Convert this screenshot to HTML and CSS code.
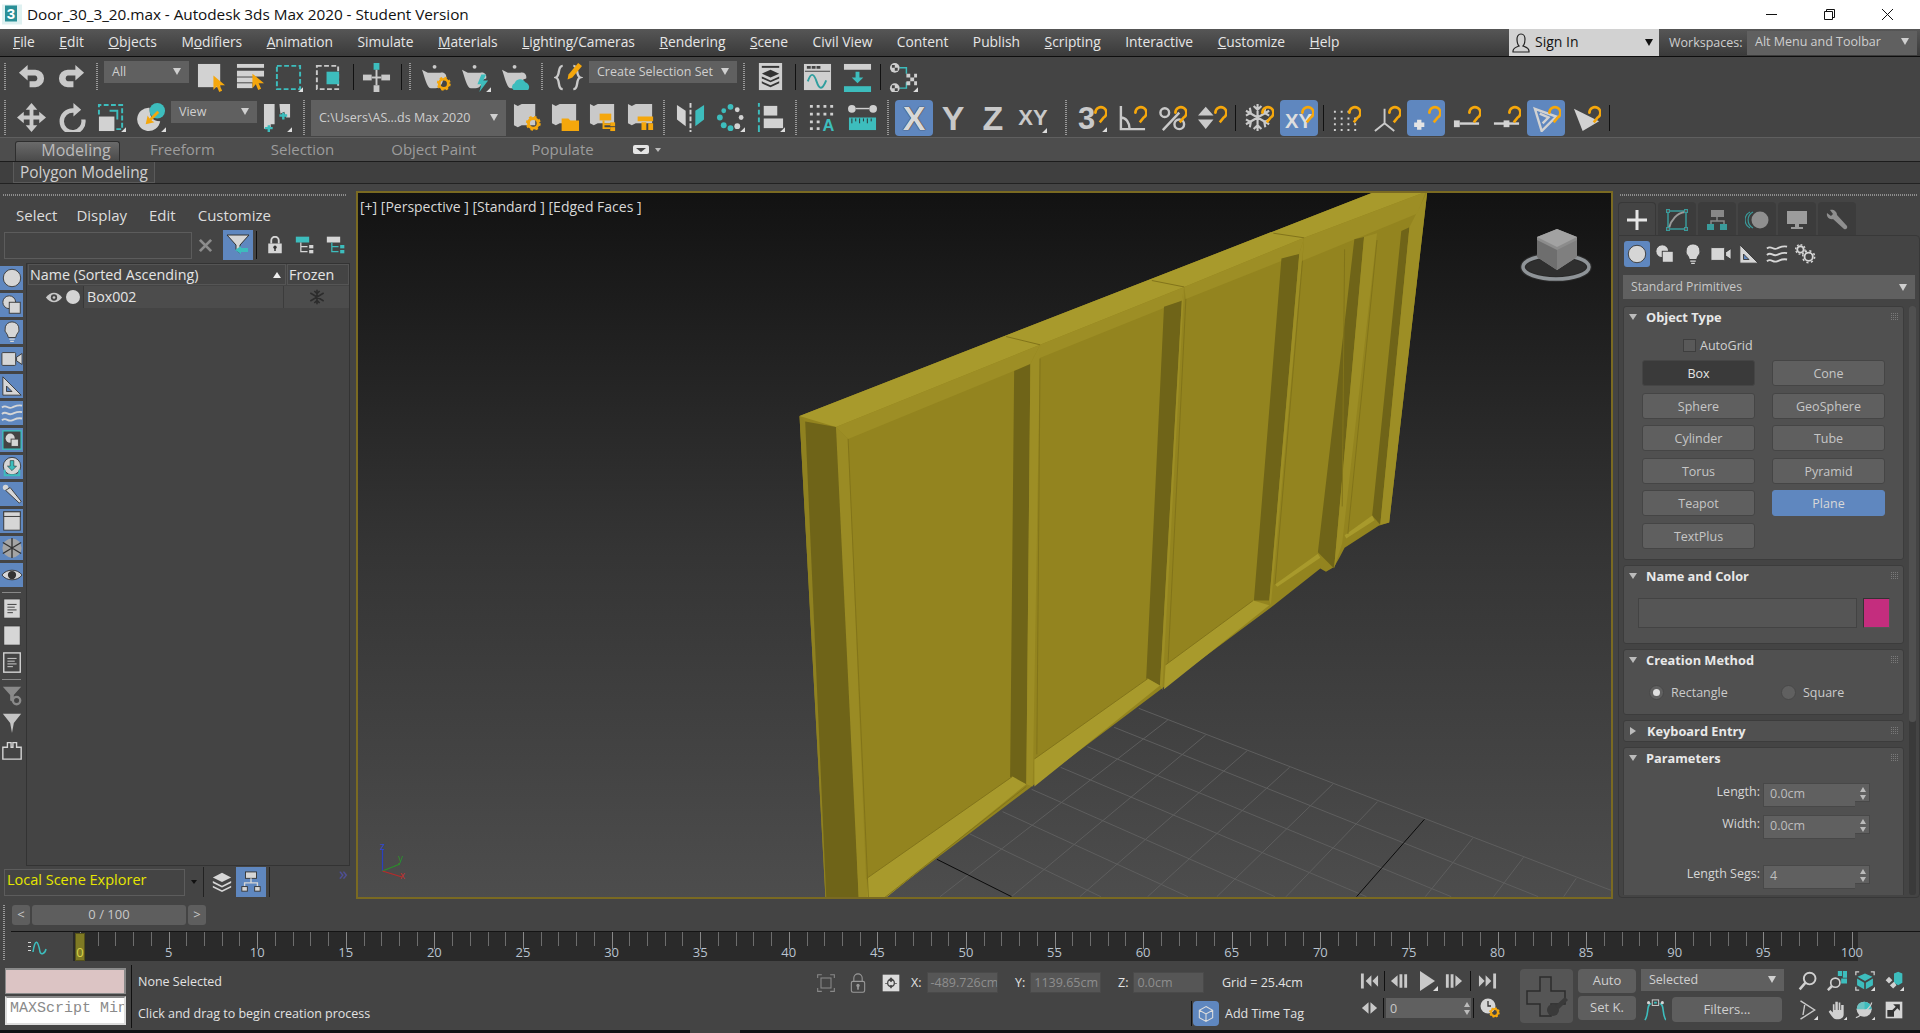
FILE: index.html
```html
<!DOCTYPE html>
<html lang="en">
<head>
<meta charset="utf-8">
<title>Door_30_3_20.max - Autodesk 3ds Max 2020 - Student Version</title>
<link rel="stylesheet" href="styles.css">
</head>
<body>
<svg class="sprite" width="0" height="0" aria-hidden="true">
<defs>
<symbol id="corner" viewBox="0 0 30 30"><path d="M25 30h5v-5z" fill="#ddd"/></symbol>
<symbol id="magnet" viewBox="0 0 30 30"><path d="M18 10a5.7 5.7 0 1 1 8.6 5L22.500 20" fill="none" stroke="#f5a70c" stroke-width="2.700"/><circle cx="18" cy="10" r="1.300" fill="#f5a70c"/></symbol>
<symbol id="gear" viewBox="0 0 16 16"><circle cx="8" cy="8" r="5" fill="none" stroke="#f5a70c" stroke-width="3"/><circle cx="8" cy="8" r="6.500" fill="none" stroke="#f5a70c" stroke-width="2.400" stroke-dasharray="2.600 2.500"/></symbol>
<symbol id="undo" viewBox="0 0 30 30"><path fill="#c9c9c9" d="M2 10 11 2v5h8a9 9 0 0 1 0 18h-6v-6h6a3.200 3.200 0 0 0 0-6h-8v5z"/></symbol>
<symbol id="redo" viewBox="0 0 30 30"><path fill="#c9c9c9" transform="matrix(-1 0 0 1 30 0)" d="M2 10 11 2v5h8a9 9 0 0 1 0 18h-6v-6h6a3.200 3.200 0 0 0 0-6h-8v5z"/></symbol>
<symbol id="select" viewBox="0 0 30 30"><rect x="1" y="1" width="23" height="24" fill="#d2d2d2"/><path fill="#f5a70c" d="M17 13v15l3.500-4 2.500 6 3-1.300-2.600-5.700H29z"/></symbol>
<symbol id="byname" viewBox="0 0 30 30"><g fill="#d2d2d2"><rect x="1" y="1" width="28" height="4"/><rect x="1" y="8" width="28" height="6"/><rect x="1" y="15" width="17" height="5"/><rect x="1" y="21" width="16" height="5"/></g><path fill="#f5a70c" d="M17 11v15l3.500-4 2.500 6 3-1.300-2.600-5.700H29z"/></symbol>
<symbol id="region" viewBox="0 0 30 30"><rect x="3" y="3" width="24" height="24" fill="none" stroke="#3dbdbd" stroke-width="2" stroke-dasharray="5 2.500"/><use href="#corner"/></symbol>
<symbol id="window" viewBox="0 0 30 30"><rect x="4" y="3" width="22" height="24" fill="none" stroke="#c9c9c9" stroke-width="2" stroke-dasharray="5 2.500"/><rect x="14" y="9" width="13" height="13" fill="#3dbdbd"/></symbol>
<symbol id="place" viewBox="0 0 30 30"><rect x="12" y="0" width="6" height="7" fill="#3dbdbd"/><g fill="#c9c9c9"><rect x="1" y="12" width="9" height="6"/><rect x="20" y="12" width="9" height="6"/><rect x="12" y="23" width="6" height="7"/><rect x="14" y="7" width="2" height="16"/><rect x="10" y="14" width="10" height="2"/></g></symbol>
<symbol id="teapot" viewBox="0 0 30 30"><circle cx="13" cy="4" r="2" fill="#c9c9c9"/><path fill="#c9c9c9" d="M0 7l6 3h13c4-1 7 2 6 6l-3 1c-1 4-3 9-8 9H9C5 26 3 15 0 7z"/></symbol>
<symbol id="render1" viewBox="0 0 30 30"><use href="#teapot"/><use href="#gear" x="15" y="14" width="15" height="15"/></symbol>
<symbol id="render2" viewBox="0 0 30 30"><use href="#teapot"/><path fill="#3dbdbd" d="M20 12l-4 10h4l-2 8 9-12h-5l3-6z"/><use href="#corner"/></symbol>
<symbol id="render3" viewBox="0 0 30 30"><use href="#teapot"/><path fill="#3dbdbd" d="M12 28a4 4 0 0 1 1-7 6 6 0 0 1 11-1 5 5 0 0 1 3 8z"/></symbol>
<symbol id="braces" viewBox="0 0 30 30"><path fill="none" stroke="#c9c9c9" stroke-width="2.500" d="M9 3C3 3 7 13 2 15c5 2 1 12 7 12M20 3c6 0 2 10 7 12-5 2-1 12-7 12"/><path fill="#f5a70c" d="M25 0l4 3-10 12-5 2 1-5z"/></symbol>
<symbol id="layers" viewBox="0 0 30 30"><rect x="3" y="0" width="24" height="28" fill="#cfcfcf"/><rect x="6" y="3" width="18" height="2" fill="#333"/><path fill="#333" d="M15 7l9 4-9 4-9-4zM6 14l9 4 9-4v2l-9 4-9-4zM6 19l9 4 9-4v2l-9 4-9-4z"/></symbol>
<symbol id="curve" viewBox="0 0 30 30"><rect x="1" y="1" width="28" height="27" fill="#cfcfcf"/><path fill="#444" d="M2 8h26v1H2zM4 3h4v3H4zM9 3h4v3H9zM14 3h4v3h-4z"/><path fill="none" stroke="#2f9e9e" stroke-width="2" d="M5 19c3-9 6-9 9 0s6 9 10-1"/></symbol>
<symbol id="dope" viewBox="0 0 30 30"><rect x="1" y="1" width="28" height="6" fill="#cfcfcf"/><rect x="1" y="24" width="28" height="6" fill="#3dbdbd"/><path fill="#3dbdbd" d="M13 9h4v6h4l-6 6-6-6h4z"/></symbol>
<symbol id="schema" viewBox="0 0 30 30"><path fill="none" stroke="#3dbdbd" stroke-width="1.500" d="M11 5h7v6M11 26h7v-6"/><g fill="#cfcfcf"><circle cx="6" cy="5" r="5"/><circle cx="6" cy="26" r="5"/><path d="M18 11h4v4h-4zM22 15h4v4h-4zM18 19h4v4h-4zM26 11h3v4h-3zM26 19h3v4h-3z"/></g><path fill="#444" d="M3 2h3v3H3zM6 5h3v3H6zM3 23h3v3H3zM6 26h3v3H6z"/><use href="#corner"/></symbol>
<symbol id="move" viewBox="0 0 30 30"><path fill="#c9c9c9" d="M15 0l6 7h-4v6h6V9l7 6-7 6v-4h-6v6h4l-6 7-6-7h4v-6H7v4l-7-6 7-6v4h6V7H9z"/></symbol>
<symbol id="rotate" viewBox="0 0 30 30"><path fill="#c9c9c9" d="M17 0l8 7-8 7v-4a9 9 0 1 0 8 7h4.500A13.500 13.500 0 1 1 17 5.500z"/></symbol>
<symbol id="scale" viewBox="0 0 30 30"><rect x="2" y="14" width="16" height="15" fill="#d2d2d2"/><path fill="none" stroke="#3dbdbd" stroke-width="2" stroke-dasharray="5 2.500" d="M2 12V2h24v25H20"/><path fill="none" stroke="#3dbdbd" stroke-width="2" d="M13 8h8v9"/><use href="#corner"/></symbol>
<symbol id="placement" viewBox="0 0 30 30"><path fill="#d2d2d2" d="M13 5a12 12 0 1 0 11 14C15 19 13 13 13 5z"/><circle cx="21" cy="8" r="8" fill="#3dbdbd"/><path fill="#f5a70c" d="M21 8l-8 8-2-3-2 9 9-2-3-2 8-8z"/><use href="#corner"/></symbol>
<symbol id="pivot" viewBox="0 0 30 30"><path fill="#d2d2d2" d="M1 1h11v21H8v5l-3-2-4 2zM17 1h11v14h-4l-2-6-4 2z"/><path fill="none" stroke="#3dbdbd" stroke-width="2.500" d="M6 23v7M2 26h8M21 10v7M17 13h8"/><use href="#corner"/></symbol>
<symbol id="scroll1" viewBox="0 0 30 30"><path fill="#c9c9c9" d="M1 1l4 2 4-2h14v22H9l-4 2-4-2z"/><use href="#gear" x="13" y="13" width="16" height="16"/></symbol>
<symbol id="scroll2" viewBox="0 0 30 30"><path fill="#c9c9c9" d="M1 1l4 2 4-2h17v20H9l-4 2-4-2z"/><path fill="#f5a70c" d="M11 16h7l2 2h9v11H11z"/></symbol>
<symbol id="scroll3" viewBox="0 0 30 30"><path fill="#c9c9c9" d="M1 1l4 2 4-2h17v20H9l-4 2-4-2z"/><rect x="11" y="11" width="12" height="7" fill="#f5a70c"/><path fill="none" stroke="#f5a70c" stroke-width="2" d="M15 18v8h7M15 22h7"/><rect x="22" y="20" width="5" height="4" fill="#f5a70c"/><rect x="22" y="25" width="5" height="4" fill="#f5a70c"/></symbol>
<symbol id="scroll4" viewBox="0 0 30 30"><path fill="#c9c9c9" d="M1 1l4 2 4-2h17v20H9l-4 2-4-2z"/><path fill="#f5a70c" d="M11 14h16v5H11zM15 20h5v8h-5zM22 21h5v7h-5z"/></symbol>
<symbol id="mirror" viewBox="0 0 30 30"><path fill="#d2d2d2" d="M1 2l9 6v16l-9-7z"/><path fill="#3dbdbd" d="M29 2l-9 6v16l9-7z"/><path stroke="#d2d2d2" stroke-width="2" stroke-dasharray="5 2" d="M15 0v30"/></symbol>
<symbol id="array" viewBox="0 0 30 30"><g fill="#3dbdbd"><circle cx="15" cy="4" r="3"/><circle cx="4" cy="15" r="3"/><circle cx="8" cy="8" r="2.500"/><circle cx="8" cy="23" r="3"/><circle cx="15" cy="26" r="3"/></g><g fill="#d2d2d2"><circle cx="22" cy="7" r="2.500"/><circle cx="26" cy="15" r="2.500"/><circle cx="22" cy="24" r="3"/></g><use href="#corner"/></symbol>
<symbol id="align" viewBox="0 0 30 30"><path fill="#3dbdbd" d="M2 0h2v4H2zM2 7h2v5H2zM2 15h2v5H2zM2 23h2v7H2z"/><rect x="8" y="3" width="14" height="10" fill="#d2d2d2"/><rect x="8" y="16" width="20" height="10" fill="#d2d2d2"/><use href="#corner"/></symbol>
<symbol id="gridA" viewBox="0 0 30 30"><g fill="#cfcfcf"><path d="M2 2h3v3H2zM9 2h3v3H9zM16 2h3v3h-3zM23 2h3v3h-3zM2 10h3v3H2zM9 10h3v3H9zM16 10h3v3h-3zM23 10h3v3h-3zM2 18h3v3H2zM9 18h3v3H9zM2 25h3v3H2zM9 25h3v3H9z"/></g><text x="15" y="29" class="svg-a">A</text></symbol>
<symbol id="measure" viewBox="0 0 30 30"><g fill="#cfcfcf"><circle cx="4" cy="6" r="4"/><circle cx="26" cy="6" r="4"/><rect x="8" y="5" width="14" height="1.500"/></g><rect x="1" y="15" width="28" height="13" fill="#3dbdbd"/><path stroke="#333" stroke-width="1" d="M4 16v5M8 16v3M12 16v5M16 16v3M20 16v5M24 16v3"/></symbol>
<symbol id="snap3" viewBox="0 0 30 30"><text x="0" y="27" class="svg-3">3</text><use href="#magnet"/><use href="#corner"/></symbol>
<symbol id="snapang" viewBox="0 0 30 30"><path fill="none" stroke="#c9c9c9" stroke-width="2.500" d="M3 3v24h25M3 15c5 0 9 5 9 12"/><use href="#magnet"/></symbol>
<symbol id="snappct" viewBox="0 0 30 30"><circle cx="7" cy="10" r="4.500" fill="none" stroke="#c9c9c9" stroke-width="2.500"/><circle cx="22" cy="22" r="5" fill="none" stroke="#c9c9c9" stroke-width="2.500"/><path stroke="#c9c9c9" stroke-width="2.500" d="M5 28L22 10"/><use href="#magnet"/></symbol>
<symbol id="snapspin" viewBox="0 0 30 30"><path fill="#c9c9c9" d="M8 4l8 9H0zM0 17h16l-8 10z"/><use href="#magnet"/></symbol>
<symbol id="flake" viewBox="0 0 30 30"><g stroke="#c9c9c9" stroke-width="2.200" fill="none"><path d="M13 1v28M1 8l24 14M1 22L25 8M9 3l4 4 4-4M9 27l4-4 4 4M1 13l5-3-1-5M1 17l5 3-1 5M25 13l-5-3 1-5M25 17l-5 3 1 5"/></g><use href="#magnet"/></symbol>
<symbol id="snapxy" viewBox="0 0 30 30"><text x="0" y="26" class="svg-xy">XY</text><use href="#magnet"/></symbol>
<symbol id="snapgrid" viewBox="0 0 30 30"><g fill="#cfcfcf"><path d="M2 8h2v2H2zM9 8h2v2H9zM16 8h2v2h-2zM2 15h2v2H2zM9 15h2v2H9zM16 15h2v2h-2zM23 15h2v2h-2zM2 21h2v2H2zM9 21h2v2H9zM16 21h2v2h-2zM23 21h2v2h-2zM2 27h2v2H2zM9 27h2v2H9zM16 27h2v2h-2zM23 27h2v2h-2z"/></g><use href="#magnet"/></symbol>
<symbol id="snapaxis" viewBox="0 0 30 30"><path fill="none" stroke="#c9c9c9" stroke-width="2" d="M13 6v15L3 29M13 21l10 8"/><use href="#magnet"/></symbol>
<symbol id="snapplus" viewBox="0 0 30 30"><path fill="#e4e4e4" d="M6 18h3v3h3v3H9v3H6v-3H3v-3h3z" stroke="#e4e4e4" stroke-width="1.500"/><use href="#magnet"/></symbol>
<symbol id="snapdl" viewBox="0 0 30 30"><rect x="2" y="18" width="6" height="7" fill="#d2d2d2"/><rect x="8" y="20" width="20" height="2.500" fill="#d2d2d2"/><use href="#magnet"/></symbol>
<symbol id="snapdm" viewBox="0 0 30 30"><rect x="12" y="18" width="6" height="7" fill="#d2d2d2"/><rect x="2" y="20" width="26" height="2.500" fill="#d2d2d2"/><use href="#magnet"/></symbol>
<symbol id="snaptri" viewBox="0 0 30 30"><path fill="none" stroke="#d2d2d2" stroke-width="2.500" d="M3 6l22 8-15 15zM8 11l9 4-6 6" /><use href="#magnet"/></symbol>
<symbol id="snaparrow" viewBox="0 0 30 30"><path fill="#d2d2d2" d="M2 6l26 13-17 10z"/><use href="#magnet"/></symbol>
<symbol id="user" viewBox="0 0 20 20"><path fill="none" stroke="#222" stroke-width="1.200" d="M10 1c3 0 4 3 4 5 0 3-1 6-2 7 3 1 6 2 6 5v1H2v-1c0-3 3-4 6-5-1-1-2-4-2-7 0-2 1-5 4-5z"/></symbol>
<symbol id="sphere" viewBox="0 0 24 24"><circle cx="12" cy="12" r="9.500" fill="#d6d6d6" stroke="#383838" stroke-width="1"/></symbol>
<symbol id="shapes" viewBox="0 0 24 24"><circle cx="9" cy="9" r="7" fill="#d6d6d6" stroke="#383838"/><rect x="9" y="9" width="12" height="12" fill="#d6d6d6" stroke="#383838"/></symbol>
<symbol id="light" viewBox="0 0 24 24"><path fill="#d6d6d6" stroke="#383838" d="M12 1a8 8 0 0 1 5 14l-1 3H8l-1-3A8 8 0 0 1 12 1z"/><path fill="#d6d6d6" d="M9 19h6v1.500H9zM10 21.500h4V23h-4z"/></symbol>
<symbol id="camera" viewBox="0 0 24 24"><rect x="1" y="5" width="15" height="14" rx="1" fill="#d6d6d6" stroke="#383838"/><path fill="#d6d6d6" stroke="#383838" d="M17 10l6-4v12l-6-4z"/></symbol>
<symbol id="helper" viewBox="0 0 24 24"><path fill="#d6d6d6" stroke="#383838" d="M2 2l20 20H2z"/><path fill="#5f87bf" stroke="#383838" d="M6 12l6 6H6z"/></symbol>
<symbol id="waves" viewBox="0 0 24 24"><path fill="none" stroke="#d6d6d6" stroke-width="2" d="M1 6c5-4 6 2 11 0s6-3 11-2M1 13c5-4 6 2 11 0s6-3 11-2M1 20c5-4 6 2 11 0s6-3 11-2"/></symbol>
<symbol id="group" viewBox="0 0 24 24"><rect x="2" y="2" width="20" height="20" fill="#444" stroke="#3dbdbd" stroke-width="1.500"/><circle cx="10" cy="10" r="5" fill="#d6d6d6"/><rect x="11" y="11" width="8" height="8" fill="#d6d6d6" stroke="#444"/></symbol>
<symbol id="xref" viewBox="0 0 24 24"><circle cx="12" cy="11" r="9.500" fill="#d6d6d6" stroke="#383838"/><path fill="#3dbdbd" stroke="#222" stroke-width=".6" d="M10 5h4v6h3l-5 5-5-5h3z"/><path fill="none" stroke="#3dbdbd" stroke-width="2" d="M4 15v6h16v-6"/></symbol>
<symbol id="bone" viewBox="0 0 24 24"><circle cx="5" cy="5" r="3" fill="#d6d6d6"/><path fill="#d6d6d6" stroke="#383838" d="M5 8l5-3 12 15-2 2z"/></symbol>
<symbol id="boxs" viewBox="0 0 24 24"><rect x="3" y="2" width="18" height="20" fill="#d6d6d6" stroke="#333"/><rect x="3" y="2" width="18" height="5" fill="#d6d6d6" stroke="#333"/></symbol>
<symbol id="flakes" viewBox="0 0 24 24"><circle cx="12" cy="12" r="10.500" fill="#a4a4a4"/><g stroke="#333" stroke-width="1.500" fill="none"><path d="M12 1v22M2 6l20 12M2 18L22 6"/></g></symbol>
<symbol id="eye" viewBox="0 0 24 24"><path fill="#d6d6d6" stroke="#333" d="M1 12c5-7 17-7 22 0-5 7-17 7-22 0z"/><circle cx="12" cy="12" r="4.500" fill="#333"/></symbol>
<symbol id="doc1" viewBox="0 0 24 24"><rect x="3" y="1" width="18" height="21" fill="#d6d6d6" stroke="#333"/><path stroke="#333" d="M7 7h10M7 10h8M7 13h10M7 16h6"/></symbol>
<symbol id="doc2" viewBox="0 0 24 24"><rect x="3" y="1" width="18" height="21" fill="#d6d6d6" stroke="#333"/></symbol>
<symbol id="doc3" viewBox="0 0 24 24"><rect x="3" y="1" width="18" height="21" fill="#444" stroke="#d6d6d6" stroke-width="1.500"/><path stroke="#d6d6d6" d="M7 7h10M7 10h8M7 13h10M7 16h6"/></symbol>
<symbol id="filtg" viewBox="0 0 24 24"><path fill="#8a8a8a" d="M2 2h20l-8 9v8l-4-2v-6z"/><circle cx="17" cy="17" r="4" fill="none" stroke="#8a8a8a" stroke-width="2.500"/></symbol>
<symbol id="filt" viewBox="0 0 24 24"><path fill="#c4c4c4" d="M2 2h20l-8 10-2 11-2-11z"/></symbol>
<symbol id="bracket" viewBox="0 0 24 24"><path fill="none" stroke="#d6d6d6" stroke-width="1.500" d="M2 9h5V4h4v5h2V4h4v5h5v13H2z"/></symbol>
<symbol id="filtb" viewBox="0 0 24 24"><path fill="#d6d6d6" stroke="#333" d="M1 2h22l-9 10v8l-4-3v-5z"/><path fill="#3dbdbd" d="M9 17l6-4v2h7v4h-7v2z"/></symbol>
<symbol id="lock" viewBox="0 0 24 24"><rect x="3" y="10" width="18" height="13" fill="#d6d6d6"/><path fill="none" stroke="#d6d6d6" stroke-width="2.500" d="M7 10V6a5 5 0 0 1 10 0v4"/><circle cx="12" cy="15" r="2.200" fill="#333"/><rect x="11" y="15" width="2" height="5" fill="#333"/></symbol>
<symbol id="tree1" viewBox="0 0 24 24"><rect x="1" y="2" width="16" height="7" fill="#3dbdbd"/><path fill="none" stroke="#d6d6d6" stroke-width="1.500" d="M7 9v11h8M7 14h8"/><rect x="17" y="12" width="5" height="4" fill="#d6d6d6"/><rect x="17" y="18" width="5" height="4" fill="#d6d6d6"/></symbol>
<symbol id="tree2" viewBox="0 0 24 24"><rect x="1" y="2" width="16" height="7" fill="#d6d6d6"/><path fill="none" stroke="#3dbdbd" stroke-width="1.500" d="M7 9v11h8M7 14h8"/><rect x="17" y="12" width="5" height="4" fill="#3dbdbd"/><rect x="17" y="18" width="5" height="4" fill="#3dbdbd"/></symbol>
<symbol id="graph" viewBox="0 0 24 24"><rect x="6" y="1" width="12" height="7" fill="#d6d6d6" stroke="#333"/><path fill="none" stroke="#d6d6d6" stroke-width="1.500" d="M12 8v5M5 17v-4h14v4"/><rect x="2" y="17" width="6" height="5" fill="#d6d6d6" stroke="#333"/><rect x="16" y="17" width="6" height="5" fill="#d6d6d6" stroke="#333"/></symbol>
<symbol id="stack" viewBox="0 0 24 24"><path fill="#d6d6d6" d="M12 2l10 5-10 5L2 7zM2 11l10 5 10-5 0 2-10 5-10-5zM2 16l10 5 10-5 0 2-10 5-10-5z"/></symbol>
<symbol id="plus" viewBox="0 0 24 24"><path fill="#e6e6e6" d="M10.500 2h3v8.500H22v3h-8.500V22h-3v-8.500H2v-3h8.500z"/></symbol>
<symbol id="modify" viewBox="0 0 24 24"><rect x="3" y="3" width="18" height="18" fill="none" stroke="#3a9b9b" stroke-width="1.500"/><path fill="none" stroke="#9a9a9a" stroke-width="2" d="M4 20C6 12 12 5 20 4"/><g fill="#555" stroke="#3a9b9b"><rect x="1.500" y="1.500" width="3" height="3"/><rect x="19.500" y="1.500" width="3" height="3"/><rect x="1.500" y="19.500" width="3" height="3"/><rect x="19.500" y="19.500" width="3" height="3"/></g></symbol>
<symbol id="hier" viewBox="0 0 24 24"><rect x="6" y="2" width="13" height="7" fill="#888"/><path fill="none" stroke="#888" stroke-width="1.500" d="M12 9v4M6 17v-4h13v4"/><rect x="2" y="16" width="7" height="6" fill="#3a9b9b"/><rect x="15" y="16" width="7" height="6" fill="#3a9b9b"/></symbol>
<symbol id="motion" viewBox="0 0 24 24"><circle cx="15" cy="12" r="8.500" fill="#8f8f8f"/><path fill="none" stroke="#3a9b9b" stroke-width="1.200" d="M8 4a9 9 0 0 0 0 16M5 4a9 9 0 0 0 0 16"/></symbol>
<symbol id="display" viewBox="0 0 24 24"><rect x="2" y="3" width="20" height="13" fill="#9c9c9c"/><rect x="10" y="16" width="4" height="3" fill="#9c9c9c"/><rect x="6" y="19" width="12" height="2" fill="#9c9c9c"/></symbol>
<symbol id="wrench" viewBox="0 0 24 24"><path fill="#8f8f8f" d="M2 5l4 3 2-2-3-4c3-1 7 1 7 5l10 11c1 2-1 4-3 3L8 11C5 12 1 9 2 5z"/></symbol>
<symbol id="gears" viewBox="0 0 24 24"><circle cx="7" cy="7" r="3.500" fill="none" stroke="#d6d6d6" stroke-width="2"/><circle cx="7" cy="7" r="5.200" fill="none" stroke="#d6d6d6" stroke-width="1.500" stroke-dasharray="2 2"/><circle cx="16" cy="15" r="4.500" fill="none" stroke="#d6d6d6" stroke-width="2"/><circle cx="16" cy="15" r="6.500" fill="none" stroke="#d6d6d6" stroke-width="1.700" stroke-dasharray="2.300 2.800"/></symbol>
<symbol id="waveline" viewBox="0 0 20 16"><path fill="#d6d6d6" d="M0 3h3v1H0zM0 7h3v1H0zM0 11h3v1H0z"/><path fill="none" stroke="#3dbdbd" stroke-width="1.500" d="M5 13c2-14 5-12 7 0 1 3 5 2 6-3"/></symbol>
<symbol id="pstart" viewBox="0 0 20 16"><path fill="#c9c9c9" d="M1 0h3v16H1zM12 2v12l-6-6zM19 2v12l-6-6z"/></symbol>
<symbol id="pprev" viewBox="0 0 20 16"><path fill="#c9c9c9" d="M8 2v12L1 8zM10 1h3v14h-3zM15 1h3v14h-3z"/></symbol>
<symbol id="pnext" viewBox="0 0 20 16"><path fill="#c9c9c9" d="M12 2v12l7-6zM2 1h3v14H2zM7 1h3v14H7z"/></symbol>
<symbol id="pend" viewBox="0 0 20 16"><path fill="#c9c9c9" d="M16 0h3v16h-3zM8 2v12l6-6zM1 2v12l6-6z"/></symbol>
<symbol id="pplay" viewBox="0 0 20 20"><path fill="#c9c9c9" d="M2 0l15 10L2 20z"/><path fill="#ddd" d="M15 20h5v-5z"/></symbol>
<symbol id="lr" viewBox="0 0 20 16"><path fill="#c9c9c9" d="M9 2v12L2 8zM11 2v12l7-6z"/></symbol>
<symbol id="clock" viewBox="0 0 20 20"><circle cx="8" cy="8" r="7.500" fill="#d6d6d6"/><path stroke="#333" stroke-width="1.300" d="M8 3v5h3" fill="none"/><use href="#gear" x="9" y="9" width="11" height="11"/></symbol>
<symbol id="keybig" viewBox="0 0 44 44"><path fill="none" stroke="#2c2c2c" stroke-width="1.500" d="M15 3h11v14h14v13H26v12H15V30H2V17h13z"/><g fill="#3a3a3a"><circle cx="28" cy="36" r="6"/><path d="M30 32l10-9 3 3-9 9z"/></g></symbol>
<symbol id="cornerkey" viewBox="0 0 24 24"><rect x="9" y="1" width="7" height="6" fill="none" stroke="#d6d6d6"/><rect x="11" y="3" width="3" height="2" fill="#3dbdbd"/><path fill="none" stroke="#3dbdbd" stroke-width="1.700" d="M8 5C2 6 6 16 1 23M17 5c6 1 2 11 7 18"/><circle cx="5" cy="4" r="1.700" fill="#d6d6d6"/><circle cx="20" cy="4" r="1.700" fill="#d6d6d6"/></symbol>
<symbol id="nzoom" viewBox="0 0 24 24"><circle cx="14" cy="9" r="7" fill="none" stroke="#d0d0d0" stroke-width="2.300"/><path stroke="#d0d0d0" stroke-width="3" d="M9 14L2 22"/></symbol>
<symbol id="nzoomall" viewBox="0 0 24 24"><circle cx="10" cy="14" r="5.500" fill="none" stroke="#d0d0d0" stroke-width="2"/><path stroke="#d0d0d0" stroke-width="3" d="M6 18L1 23"/><path fill="#3dbdbd" d="M13 0h5v6h-5zM19 0h5v8h-5zM17 9h7v6h-7z"/></symbol>
<symbol id="nextents" viewBox="0 0 24 24"><path fill="none" stroke="#d0d0d0" stroke-width="1.500" d="M1 5V1h4M19 1h4v4M1 19v4h4"/><path fill="#3dbdbd" d="M12 3l9 4-9 5-9-5zM2.500 9l8.500 5v8l-8.500-5zM21.500 9l-8.500 5v8l8.500-5z"/><path fill="#ddd" d="M19 24h5v-5z"/></symbol>
<symbol id="nextall" viewBox="0 0 24 24"><path fill="#3dbdbd" d="M17 1l5 2v11l-5 3-5-3V3zM12 14z"/><path fill="#d0d0d0" d="M6 7l4 4-4 4-4-4zM12 13l3 4-4 4-4-4z"/><path fill="#ddd" d="M19 24h5v-5z"/></symbol>
<symbol id="nfov" viewBox="0 0 24 24"><path fill="none" stroke="#c9c9c9" stroke-width="1.700" d="M3 1l17 11L3 23M8 6l-2 12"/><path fill="#ddd" d="M19 24h5v-5z"/></symbol>
<symbol id="nhand" viewBox="0 0 24 24"><path fill="#d0d0d0" d="M2 14l2-2 3 3V5h2v7h1V2h3v10h1V3h2v9h1V6h3v11c0 4-3 6-6 6h-3c-3 0-4-2-9-9z"/><path fill="#ddd" d="M20 24h4v-4z"/></symbol>
<symbol id="narc" viewBox="0 0 24 24"><circle cx="11" cy="11" r="9" fill="#d0d0d0"/><path fill="#3dbdbd" d="M11 2a9 9 0 0 1 9 9h-9z"/><path fill="#3dbdbd" d="M2 11a9 9 0 0 1 9-9v9z" opacity=".7"/><path fill="none" stroke="#d0d0d0" stroke-width="1.500" d="M1 21C5 21 20 8 20 3"/><path fill="#ddd" d="M20 24h4v-4z"/></symbol>
<symbol id="nmax" viewBox="0 0 24 24"><rect x="2" y="2" width="20" height="20" fill="#d6d6d6"/><path fill="#333" d="M4 20V12l8 0v8zM11 5h8v8l-3-3-4 4-2-2 4-4z"/></symbol>
<symbol id="focus" viewBox="0 0 24 24"><path fill="none" stroke="#888" stroke-width="1.300" d="M2 6V2h5M17 2h5v4M2 18v4h5M17 22h5v-4"/><rect x="6" y="6" width="12" height="12" fill="none" stroke="#888" stroke-width="1.300"/></symbol>
<symbol id="lockout" viewBox="0 0 24 24"><rect x="4" y="10" width="16" height="13" rx="2" fill="none" stroke="#999" stroke-width="1.300"/><path fill="none" stroke="#999" stroke-width="1.300" d="M7 10V6a5 5 0 0 1 10 0v4"/><circle cx="12" cy="15" r="2" fill="#999"/><rect x="11" y="15" width="2" height="5" fill="#999"/></symbol>
<symbol id="abs" viewBox="0 0 24 24"><rect x="2" y="2" width="20" height="20" fill="#dcdcdc"/><path fill="#444" d="M12 5l3 3-3 3-3-3zM5 12h3v1H5zM16 12h3v1h-3zM12 14l2 2-2 3-2-3z"/><circle cx="12" cy="12" r="4" fill="none" stroke="#444" stroke-width="1.500"/></symbol>
<symbol id="cube" viewBox="0 0 24 24"><path fill="none" stroke="#ddd" stroke-width="1.300" d="M12 3l8 4.500v9L12 21l-8-4.500v-9zM4 7.500l8 4.500 8-4.500M12 12v9"/></symbol>
<symbol id="dotsq" viewBox="0 0 8 8"><path fill="#7a7a7a" d="M0 0h1v1H0zM2 0h1v1H2zM4 0h1v1H4zM6 0h1v1H6zM0 2h1v1H0zM2 2h1v1H2zM4 2h1v1H4zM6 2h1v1H6zM0 4h1v1H0zM2 4h1v1H2zM4 4h1v1H4zM6 4h1v1H6zM0 6h1v1H0zM2 6h1v1H2zM4 6h1v1H4zM6 6h1v1H6z"/></symbol>
<symbol id="ribbonicon" viewBox="0 0 16 10"><rect x="0" y="0" width="16" height="9" rx="2" fill="#e4e4e4"/><path fill="#444" d="M3 3h10l-5 4z"/></symbol>
<symbol id="frozenflake" viewBox="0 0 24 24"><g stroke="#2c2c2c" stroke-width="2.400" fill="none"><path d="M12 1v22M2 6l20 12M2 18L22 6M8 3l4 4 4-4M8 21l4-4 4 4"/></g></symbol>
</defs>
</svg>

<div class="app">
  <header class="title">
    <svg class="app-logo" viewBox="0 0 20 20"><rect width="20" height="20" fill="#dff1f1"/><path fill="#2a8f97" d="M3 1h12v16H3z"/><text x="9" y="14" class="svg-logo">3</text></svg>
    <span class="title-text">Door_30_3_20.max - Autodesk 3ds Max 2020 - Student Version</span>
    <div class="win-btns">
      <svg class="win" viewBox="0 0 46 29"><path d="M18 14.500h11" stroke="#111" stroke-width="1"/></svg>
      <svg class="win" viewBox="0 0 46 29"><path d="M18.500 11.500h8v8h-8zM20.500 11.500v-2h8v8h-2" fill="none" stroke="#111"/></svg>
      <svg class="win" viewBox="0 0 46 29"><path d="M18 9l11 11M29 9L18 20" stroke="#111"/></svg>
    </div>
  </header>

  <nav class="menu">
    <div class="menu-items">
      <span><u>F</u>ile</span><span><u>E</u>dit</span><span><u>O</u>bjects</span><span>M<u>o</u>difiers</span><span><u>A</u>nimation</span><span>Simulate</span><span><u>M</u>aterials</span><span><u>L</u>ighting/Cameras</span><span><u>R</u>endering</span><span><u>S</u>cene</span><span>Civil View</span><span>Content</span><span>Publish</span><span><u>S</u>cripting</span><span>Interactive</span><span><u>C</u>ustomize</span><span><u>H</u>elp</span>
    </div>
    <div class="sign-in"><svg class="user"><use href="#user"/></svg><span class="sign-text">Sign In</span><i class="tri dark"></i></div>
    <span class="ws-label">Workspaces:</span>
    <div class="dd ws"><span>Alt Menu and Toolbar</span><i class="tri"></i></div>
  </nav>

  <div class="toolbars">
    <div class="tb r1">
      <i class="grip"></i>
      <b class="ib m5"><svg class="i"><use href="#undo"/></svg></b>
      <b class="ib"><svg class="i"><use href="#redo"/></svg></b>
      <i class="grip m5"></i>
      <div class="dd all m6"><span>All</span><i class="tri"></i></div>
      <b class="ib m2"><svg class="i"><use href="#select"/></svg></b>
      <b class="ib nar"><svg class="i"><use href="#byname"/></svg></b>
      <b class="ib nar"><svg class="i"><use href="#region"/></svg></b>
      <b class="ib"><svg class="i"><use href="#window"/></svg></b>
      <i class="sep m6"></i>
      <b class="ib m2"><svg class="i"><use href="#place"/></svg></b>
      <i class="sep m5"></i>
      <i class="grip m7"></i>
      <b class="ib m5"><svg class="i"><use href="#render1"/></svg></b>
      <b class="ib"><svg class="i"><use href="#render2"/></svg></b>
      <b class="ib"><svg class="i"><use href="#render3"/></svg></b>
      <i class="grip m5"></i>
      <b class="ib m5"><svg class="i"><use href="#braces"/></svg></b>
      <div class="dd sel-set m1"><span>Create Selection Set</span><i class="tri"></i></div>
      <i class="grip m6"></i>
      <b class="ib m5"><svg class="i"><use href="#layers"/></svg></b>
      <i class="sep m5"></i>
      <b class="ib m1"><svg class="i"><use href="#curve"/></svg></b>
      <b class="ib"><svg class="i"><use href="#dope"/></svg></b>
      <i class="sep m3"></i>
      <b class="ib m2"><svg class="i"><use href="#schema"/></svg></b>
    </div>
    <div class="tb r2">
      <i class="grip"></i>
      <b class="ib m5"><svg class="i"><use href="#move"/></svg></b>
      <b class="ib"><svg class="i"><use href="#rotate"/></svg></b>
      <b class="ib"><svg class="i"><use href="#scale"/></svg></b>
      <b class="ib"><svg class="i"><use href="#placement"/></svg></b>
      <div class="dd view"><span>View</span><i class="tri"></i></div>
      <b class="ib"><svg class="i"><use href="#pivot"/></svg></b>
      <i class="grip m6"></i>
      <div class="dd path m6"><span>C:\Users\AS...ds Max 2020</span><i class="tri"></i></div>
      <b class="ib nar m2"><svg class="i"><use href="#scroll1"/></svg></b>
      <b class="ib nar"><svg class="i"><use href="#scroll2"/></svg></b>
      <b class="ib nar"><svg class="i"><use href="#scroll3"/></svg></b>
      <b class="ib nar"><svg class="i"><use href="#scroll4"/></svg></b>
      <i class="grip m3"></i>
      <b class="ib m5"><svg class="i"><use href="#mirror"/></svg></b>
      <b class="ib"><svg class="i"><use href="#array"/></svg></b>
      <b class="ib"><svg class="i"><use href="#align"/></svg></b>
      <i class="grip m5"></i>
      <b class="ib m5"><svg class="i"><use href="#gridA"/></svg></b>
      <b class="ib"><svg class="i"><use href="#measure"/></svg></b>
      <i class="grip m5"></i>
      <b class="ib axis on m6">X</b>
      <b class="ib axis">Y</b>
      <b class="ib axis">Z</b>
      <b class="ib axis small">XY<svg class="flyout" viewBox="0 0 5 5"><path d="M0 5h5V0z" fill="#ddd"/></svg></b>
      <i class="grip m12"></i>
      <b class="ib m5"><svg class="i"><use href="#snap3"/></svg></b>
      <b class="ib"><svg class="i"><use href="#snapang"/></svg></b>
      <b class="ib"><svg class="i"><use href="#snappct"/></svg></b>
      <b class="ib"><svg class="i"><use href="#snapspin"/></svg></b>
      <i class="sep m3"></i>
      <b class="ib m3"><svg class="i"><use href="#flake"/></svg></b>
      <b class="ib on m1"><svg class="i"><use href="#snapxy"/></svg></b>
      <i class="sep m5"></i>
      <b class="ib m2"><svg class="i"><use href="#snapgrid"/></svg></b>
      <b class="ib"><svg class="i"><use href="#snapaxis"/></svg></b>
      <b class="ib on m1"><svg class="i"><use href="#snapplus"/></svg></b>
      <b class="ib m1"><svg class="i"><use href="#snapdl"/></svg></b>
      <b class="ib"><svg class="i"><use href="#snapdm"/></svg></b>
      <b class="ib on m1"><svg class="i"><use href="#snaptri"/></svg></b>
      <b class="ib m1"><svg class="i"><use href="#snaparrow"/></svg></b>
      <i class="sep m3"></i>
    </div>
  </div>

  <div class="ribbon-tabs">
    <span class="rtab active">Modeling</span><span class="rtab t2">Freeform</span><span class="rtab t3">Selection</span><span class="rtab t4">Object Paint</span><span class="rtab t5">Populate</span>
    <svg class="ribbon-ic"><use href="#ribbonicon"/></svg><i class="tri mini-arrow"></i>
  </div>
  <div class="ribbon-sub"><span class="poly">Polygon Modeling</span></div>

  <main class="workspace">
    <aside class="left">
      <div class="dots"></div>
      <div class="se-menu"><span>Select</span><span>Display</span><span>Edit</span><span>Customize</span></div>
      <div class="se-tools">
        <div class="search"></div>
        <svg class="clear" viewBox="0 0 16 16"><path d="M2 2l12 12M14 2L2 14" stroke="#8c8c8c" stroke-width="3"/></svg>
        <b class="filter-btn"><svg class="s24"><use href="#filtb"/></svg></b>
        <i class="sep dark"></i>
        <svg class="s18 lockic"><use href="#lock"/></svg>
        <svg class="s20 t1"><use href="#tree1"/></svg>
        <svg class="s20 t2ic"><use href="#tree2"/></svg>
      </div>
      <div class="se-body">
        <div class="side">
          <b class="sb"><svg class="s22"><use href="#sphere"/></svg></b>
          <b class="sb"><svg class="s22"><use href="#shapes"/></svg></b>
          <b class="sb"><svg class="s22"><use href="#light"/></svg></b>
          <b class="sb"><svg class="s22"><use href="#camera"/></svg></b>
          <b class="sb"><svg class="s22"><use href="#helper"/></svg></b>
          <b class="sb"><svg class="s22"><use href="#waves"/></svg></b>
          <b class="sb"><svg class="s22"><use href="#group"/></svg></b>
          <b class="sb"><svg class="s22"><use href="#xref"/></svg></b>
          <b class="sb"><svg class="s22"><use href="#bone"/></svg></b>
          <b class="sb"><svg class="s22"><use href="#boxs"/></svg></b>
          <b class="sb"><svg class="s22"><use href="#flakes"/></svg></b>
          <b class="sb"><svg class="s22"><use href="#eye"/></svg></b>
          <i class="side-sep"></i>
          <b class="sb plain"><svg class="s22"><use href="#doc1"/></svg></b>
          <b class="sb plain"><svg class="s22"><use href="#doc2"/></svg></b>
          <b class="sb plain"><svg class="s22"><use href="#doc3"/></svg></b>
          <i class="side-sep two"></i>
          <b class="sb plain"><svg class="s22"><use href="#filtg"/></svg></b>
          <b class="sb plain"><svg class="s22"><use href="#filt"/></svg></b>
          <b class="sb plain"><svg class="s22"><use href="#bracket"/></svg></b>
        </div>
        <div class="table">
          <div class="thead">
            <span class="th name">Name (Sorted Ascending)<i class="tri up"></i></span>
            <span class="th frozen">Frozen</span>
          </div>
          <div class="trow">
            <svg class="row-eye" viewBox="0 0 20 12"><path fill="#c8c8c8" d="M1 6c5-7 13-7 18 0-5 7-13 7-18 0z"/><circle cx="10" cy="6" r="3.500" fill="#444"/><circle cx="10" cy="6" r="1.500" fill="#c8c8c8"/></svg>
            <i class="row-dot"></i>
            <span class="row-name">Box002</span>
            <span class="row-frozen"><svg class="s16"><use href="#frozenflake"/></svg></span>
          </div>
        </div>
      </div>
      <div class="se-foot">
        <div class="local">Local Scene Explorer</div>
        <i class="tri dark foot-tri"></i>
        <i class="sep foot-sep"></i>
        <svg class="s22 stack"><use href="#stack"/></svg>
        <b class="graph-btn"><svg class="s22"><use href="#graph"/></svg></b>
        <i class="sep foot-sep2"></i>
        <span class="more">&raquo;</span>
      </div>
    </aside>

    <section class="viewport">
      <svg class="scene" viewBox="358 193 1253 704" preserveAspectRatio="none">
        <defs>
          <linearGradient id="bg" x1="0" y1="0" x2="0" y2="1"><stop offset="0" stop-color="#121212"/><stop offset=".5" stop-color="#343434"/><stop offset="1" stop-color="#4d4d4d"/></linearGradient>
        </defs>
        <rect x="356" y="191" width="1257" height="708" fill="url(#bg)"/>
        <g transform="translate(920 680) scale(.4464 .3333)" stroke="#5e5e5e" fill="none">
          <g class="nss">
            <path d="M490 85L1550 632M435 142L1385 650M375 200L1190 650M315 262L1000 650M250 328L795 650M185 395L600 650M112 462L405 650"/>
            <path d="M555 120L45 650M640 165L205 650M733 212L358 650M828 262L510 650M925 312L665 650M1025 365L820 650M1238 475L1132 650M1352 532L1285 650M1470 595L1442 650"/>
            <path stroke="#0a0a0a" d="M38 538L205 650M1130 418L978 650"/>
          </g>
        </g>
        <g transform="translate(350 185) scale(.80995 .45918)">
          <path fill="#93841f" d="M555 503L1265 15H1330L1283 735L1270 742L1228 790L1222 810L1215 832L1205 842L1198 835L1137 920L1000 1100L840 1312L660 1552H587z"/>
          <path fill="#a89a2c" d="M555 503L1265 15H1328L1178 115L1030 222L852 348L600 527z"/>
          <path fill="#9d8e25" d="M600 527L852 348L840 390L615 553zM852 348L1030 222L1027 252L850 378zM1030 222L1178 115L1172 150L1032 248zM1178 115L1328 15L1318 62L1176 165z"/>
          <path fill="#8f8120" d="M555 503L562 515L594 1552H587z"/>
          <path fill="#6f6418" d="M562 515L600 527L607 600L628 1552H588z"/>
          <path fill="#9a8b24" d="M600 527L615 553L638 1552H628z"/>
          <path fill="#6f6418" d="M820 405L840 390L835 1305L815 1290zM1005 265L1027 252L1000 1090L983 1075zM1150 160L1172 150L1135 905L1116 905zM1240 118L1252 113L1215 835L1195 800zM1298 100L1308 92L1272 740L1262 720z"/>
          <path fill="#9d8e25" d="M840 390L852 348L843 1310L835 1305zM1027 252L1030 222L1003 1100L1000 1090zM1172 150L1178 115L1137 915L1135 905zM1252 113L1268 105L1225 780L1215 835zM1308 92L1330 15L1283 735L1272 740z"/>
          <path fill="#a89a2c" d="M638 1510L818 1288L835 1305L662 1552H638zM845 1250L985 1075L1000 1090L845 1310zM1007 1045L1115 905L1135 915L1005 1098zM1142 870L1195 803L1198 812L1145 875zM1228 763L1262 720L1265 730L1230 770z"/>
          <path class="nss" fill="none" stroke="#82741a" d="M810 330L852 348M990 208L1030 222M1140 105L1178 115M615 553L640 1552M852 378L848 1240M1032 248L1010 1040M1176 165L1142 870M1228 140L1225 700M1268 120L1232 760M638 1510L818 1288M845 1250L985 1075M1007 1045L1115 905M660 1552L835 1310"/>
        </g>
        <g class="cube3d">
          <ellipse cx="1556" cy="267" rx="33" ry="12" fill="#2f2f2f" stroke="#2a2a2a" stroke-width="6"/>
          <ellipse cx="1556" cy="267" rx="33" ry="12" fill="none" stroke="#8f9498" stroke-width="3.500"/>
          <path fill="#8c8c8c" d="M1557 229L1577 237V257L1557 270L1537 257V237z"/>
          <path fill="#6e6e6e" d="M1537 240L1557 250V270L1537 257z"/>
          <path fill="#7f7f7f" d="M1577 240L1557 250V270L1577 257z"/>
          <path fill="#a2a2a2" d="M1557 229L1577 237L1557 247L1537 237z"/>
        </g>
        <g class="gizmo">
          <path stroke="#2a40c0" d="M382.500 871V849"/>
          <path stroke="#2b8e2b" d="M382.500 871L400 864"/>
          <path stroke="#b82a2a" d="M382.500 871L402 877"/>
          <text x="380" y="850" class="g-z">z</text>
          <text x="398" y="862" class="g-y">y</text>
          <text x="400" y="879" class="g-x">x</text>
        </g>
      </svg>
      <span class="vp-label">[+] [Perspective ] [Standard ] [Edged Faces ]</span>
    </section>

    <aside class="right">
      <div class="dots"></div>
      <div class="cmd-tabs">
        <b class="ctab active"><svg class="s24"><use href="#plus"/></svg></b>
        <b class="ctab"><svg class="s24"><use href="#modify"/></svg></b>
        <b class="ctab"><svg class="s24"><use href="#hier"/></svg></b>
        <b class="ctab"><svg class="s24"><use href="#motion"/></svg></b>
        <b class="ctab"><svg class="s24"><use href="#display"/></svg></b>
        <b class="ctab"><svg class="s24"><use href="#wrench"/></svg></b>
      </div>
      <div class="cmd-panel">
        <div class="subtabs">
          <b class="st on"><svg class="s22"><use href="#sphere"/></svg></b>
          <b class="st"><svg class="s22"><use href="#shapes"/></svg></b>
          <b class="st"><svg class="s22"><use href="#light"/></svg></b>
          <b class="st"><svg class="s22"><use href="#camera"/></svg></b>
          <b class="st"><svg class="s22"><use href="#helper"/></svg></b>
          <b class="st"><svg class="s22"><use href="#waves"/></svg></b>
          <b class="st"><svg class="s22"><use href="#gears"/></svg></b>
        </div>
        <div class="dd prim"><span>Standard Primitives</span><i class="tri"></i></div>
        <div class="rollups-wrap">
          <div class="rollups">
            <section class="rollup ro-type">
              <h3 class="ro-head"><i class="tri ro"></i>Object Type<svg class="s8"><use href="#dotsq"/></svg></h3>
              <label class="autogrid"><i class="chk"></i>AutoGrid</label>
              <div class="btn-grid">
                <span class="pbtn dark">Box</span><span class="pbtn">Cone</span>
                <span class="pbtn">Sphere</span><span class="pbtn">GeoSphere</span>
                <span class="pbtn">Cylinder</span><span class="pbtn">Tube</span>
                <span class="pbtn">Torus</span><span class="pbtn">Pyramid</span>
                <span class="pbtn">Teapot</span><span class="pbtn blue">Plane</span>
                <span class="pbtn">TextPlus</span>
              </div>
            </section>
            <section class="rollup ro-name">
              <h3 class="ro-head"><i class="tri ro"></i>Name and Color<svg class="s8"><use href="#dotsq"/></svg></h3>
              <div class="name-row"><div class="name-field"></div><div class="swatch"></div></div>
            </section>
            <section class="rollup ro-method">
              <h3 class="ro-head"><i class="tri ro"></i>Creation Method<svg class="s8"><use href="#dotsq"/></svg></h3>
              <div class="radios">
                <label class="radio-a"><i class="radio on"></i>Rectangle</label>
                <label class="radio-b"><i class="radio"></i>Square</label>
              </div>
            </section>
            <section class="rollup ro-key">
              <h3 class="ro-head"><i class="tri ro closed"></i>Keyboard Entry<svg class="s8"><use href="#dotsq"/></svg></h3>
            </section>
            <section class="rollup ro-params">
              <h3 class="ro-head"><i class="tri ro"></i>Parameters<svg class="s8"><use href="#dotsq"/></svg></h3>
              <div class="param"><span>Length:</span><div class="spin"><span>0.0cm</span><i class="spin-arrows"></i></div></div>
              <div class="param"><span>Width:</span><div class="spin"><span>0.0cm</span><i class="spin-arrows"></i></div></div>
              <div class="param gap"><span>Length Segs:</span><div class="spin"><span>4</span><i class="spin-arrows"></i></div></div>
            </section>
          </div>
          <div class="scrollbar"><i></i></div>
        </div>
      </div>
    </aside>
  </main>

  <section class="timeline">
    <div class="slider-row">
      <i class="grip tall"></i>
      <b class="tbtn">&lt;</b><b class="tbtn mid">0 / 100</b><b class="tbtn">&gt;</b>
    </div>
    <div class="ruler-row">
      <div class="ruler-left"><svg class="wave"><use href="#waveline"/></svg></div>
      <div class="ruler">
        <i class="thumb"></i>
        <div class="ruler-labels"><span class="z">0</span><span>5</span><span>10</span><span>15</span><span>20</span><span>25</span><span>30</span><span>35</span><span>40</span><span>45</span><span>50</span><span>55</span><span>60</span><span>65</span><span>70</span><span>75</span><span>80</span><span>85</span><span>90</span><span>95</span><span>100</span></div>
      </div>
    </div>
  </section>

  <footer class="status">
    <div class="listener"><div class="pink"></div><div class="mini-l">MAXScript Mini</div></div>
    <i class="st-sep"></i>
    <div class="prompt"><span>None Selected</span><span>Click and drag to begin creation process</span></div>
    <div class="coords">
      <div class="coord-row">
        <svg class="s20"><use href="#focus"/></svg>
        <svg class="s20 ck1"><use href="#lockout"/></svg>
        <svg class="s20 ck2"><use href="#abs"/></svg>
        <label class="ax x">X:<span class="cf">-489.726cm</span></label>
        <label class="ax">Y:<span class="cf">1139.65cm</span></label>
        <label class="ax">Z:<span class="cf">0.0cm</span></label>
        <span class="grid-val">Grid = 25.4cm</span>
      </div>
      <div class="tag-row"><i class="sep tag-sep"></i><b class="tag"><svg class="s20"><use href="#cube"/></svg></b><span>Add Time Tag</span></div>
    </div>
    <div class="play">
      <div class="play-row">
        <svg class="p20"><use href="#pstart"/></svg><i class="sep"></i>
        <svg class="p20"><use href="#pprev"/></svg>
        <svg class="p-play"><use href="#pplay"/></svg>
        <svg class="p20"><use href="#pnext"/></svg><i class="sep"></i>
        <svg class="p20"><use href="#pend"/></svg>
      </div>
      <div class="play-row two">
        <svg class="p20"><use href="#lr"/></svg><i class="sep"></i>
        <div class="frame"><span>0</span><i class="spin-arrows"></i></div><i class="sep"></i>
        <svg class="s20 clock"><use href="#clock"/></svg>
      </div>
    </div>
    <b class="bigkey"><svg class="s44"><use href="#keybig"/></svg></b>
    <div class="keys"><b class="kbtn">Auto</b><b class="kbtn">Set K.</b></div>
    <div class="keyset">
      <div class="dd selected"><span>Selected</span><i class="tri"></i></div>
      <div class="keyset-row"><svg class="s22"><use href="#cornerkey"/></svg><b class="kbtn filters">Filters...</b></div>
    </div>
    <div class="nav">
      <svg class="s20"><use href="#nzoom"/></svg><svg class="s20"><use href="#nzoomall"/></svg><svg class="s20"><use href="#nextents"/></svg><svg class="s20"><use href="#nextall"/></svg>
      <svg class="s20"><use href="#nfov"/></svg><svg class="s20"><use href="#nhand"/></svg><svg class="s20"><use href="#narc"/></svg><svg class="s20"><use href="#nmax"/></svg>
    </div>
  </footer>
  <div class="taskbar"></div>
</div>
</body>
</html>
```
FILE: styles.css
```css
*{box-sizing:border-box}
html,body{margin:0;padding:0;height:100%;background:#444;overflow:hidden}
body{font:13px/1.2 "Open Sans","Noto Sans",sans-serif;color:#cfcfcf}
b,i{font-style:normal;font-weight:normal}
.sprite{position:absolute}
.nss path,.nss{vector-effect:non-scaling-stroke}
.nss path{stroke-width:1px}
.app{display:flex;flex-direction:column;width:1920px;height:1033px;overflow:hidden}

.title{height:29px;background:#fff;display:flex;align-items:center;color:#111;flex:none}
.app-logo{width:20px;height:21px;margin-left:2px}
.svg-logo{font:bold 15px "Liberation Sans",sans-serif;fill:#fff;text-anchor:middle}
.title-text{margin-left:5px;font-size:15.350px;letter-spacing:-.05px}
.win-btns{margin-left:auto;display:flex;margin-right:10px}
.win{width:46px;height:29px;margin-left:12px}

.menu{height:28px;flex:none;display:flex;align-items:stretch;background:linear-gradient(#565656,#3a3a3a);border-bottom:1px solid #0e0e0e}
.menu-items{display:flex;gap:24.500px;padding-left:13px;width:1509px;align-items:center;color:#e6e6e6;font-size:13.800px}
.sign-in{width:150px;background:#d2d2d2;color:#111;display:flex;align-items:center;font-size:14px}
.user{width:20px;height:20px;margin-left:2px}
.sign-text{margin-left:4px}
.tri{display:inline-block;width:0;height:0;border-left:4.500px solid transparent;border-right:4.500px solid transparent;border-top:7px solid #cfcfcf;margin-left:auto}
.tri.dark{border-top-color:#111}
.sign-in .tri{margin-right:6px}
.ws-label{margin-left:10px;width:78px;align-self:center;color:#cfcfcf;font-size:12.500px}
.dd{background:#606060;color:#cfcfcf;display:flex;align-items:center;padding:0 8px 2px 8px;font-size:12.500px;flex:none}
.dd .tri{flex:none}
.ws{width:170px;height:24px;align-self:center}

.toolbars{height:80px;background:#444;flex:none;padding-top:5px}
.tb{display:flex;align-items:center;padding-left:4px}
.r1{height:30px}
.r2{height:37px;margin-top:7px}
.grip{flex:none;width:2px;height:28px;background:repeating-linear-gradient(#999 0 1px,transparent 1px 2px)}
.r2 .grip{height:36px}
.sep{flex:none;width:1px;height:26px;background:#111}
.ib{flex:none;width:40px;height:30px;display:flex;align-items:center;justify-content:center;position:relative;color:#cfcfcf}
.nar{width:38px}
.i{width:29px;height:29px;overflow:visible}
.on{background:#5f87bf;border-radius:4px;width:38px;height:36px}
.axis{font:bold 34px/1 "Liberation Sans",sans-serif;color:#c9c9c9}
.axis.on{color:#d8d8d8;text-shadow:0 0 1px #333,0 0 1px #333}
.axis.small{font-size:22px}
.flyout{position:absolute;width:5px;height:5px;right:6px;bottom:0}
.svg-a{font:bold 17px "Liberation Sans",sans-serif;fill:#3dbdbd}
.svg-3{font:bold 32px "Liberation Sans",sans-serif;fill:#c9c9c9}
.svg-xy{font:bold 21px "Liberation Sans",sans-serif;fill:#dedede}
.m1{margin-left:1px}.m2{margin-left:2px}.m3{margin-left:3px}.m5{margin-left:5px}.m6{margin-left:6px}.m7{margin-left:7px}.m12{margin-left:12px}
.all{width:85px;height:22px;align-self:flex-start;margin-top:-1px}
.sel-set{width:148px;height:22px;align-self:flex-start;margin-top:-1px}
.view{width:86px;height:22px;align-self:flex-start;margin-top:2px}
.path{width:195px;height:36px;padding:0 8px}

.ribbon-tabs{height:25px;flex:none;display:flex;align-items:flex-end;background:#4d4d4d;border-top:1px solid #5f5f5f;border-bottom:1px solid #1c1c1c;padding-left:15px;font-size:15px;color:#9c9c9c}
.rtab{height:22px;display:flex;align-items:center;justify-content:center;padding-bottom:2px}
.rtab.active{height:20px;width:105px;background:linear-gradient(#6a6a6a,#4a4a4a);border:1px solid #2e2e2e;border-bottom:0;border-radius:3px 3px 0 0;color:#bbb;padding:0 0 2px 17px;font-size:16px}
.t2{margin-left:30px}.t3{margin-left:56px}.t4{margin-left:57px}.t5{margin-left:55px}
.ribbon-ic{width:16px;height:10px;margin-left:39px;margin-bottom:6px}
.tri.mini-arrow{border-left-width:3px;border-right-width:3px;border-top-width:4px;border-top-color:#bbb;margin:0 0 9px 6px}
.ribbon-sub{height:22px;flex:none;background:#3f3f3f;border-bottom:1px solid #222;padding-left:13px}
.poly{display:inline-flex;height:21px;width:142px;align-items:center;justify-content:center;border:1px solid #5a5a5a;border-top:0;background:#454545;color:#cfcfcf;font-size:15.400px;padding-top:2px}

.workspace{height:716px;flex:none;display:flex;background:#444}
.dots{height:2px;background:repeating-linear-gradient(90deg,#8d8d8d 0 1px,transparent 1px 2px)}
.left{width:356px;flex:none;padding-top:10px;display:flex;flex-direction:column}
.left>.dots{margin:0 9px 0 3px}
.se-menu{height:34px;padding:4px 0 0 16px;display:flex;align-items:center;color:#ddd;font-size:15px;flex:none}
.se-menu span:nth-child(2){margin-left:19px}.se-menu span:nth-child(3){margin-left:22px}.se-menu span:nth-child(4){margin-left:22px}
.se-tools{height:30px;display:flex;align-items:center;flex:none}
.search{width:188px;height:27px;margin-left:4px;border:1px solid #5c5c5c}
.clear{width:15px;height:15px;margin-left:6px}
.filter-btn{width:30px;height:30px;background:#5f87bf;margin-left:10px;display:flex;align-items:center;justify-content:center}
.s24{width:24px;height:24px}.s22{width:22px;height:22px}.s20{width:20px;height:20px}.s18{width:18px;height:18px}.s16{width:16px;height:16px}.s8{width:8px;height:8px}.s44{width:44px;height:44px}
.se-tools .sep{margin-left:3px;height:28px;width:1px;background:#111}
.lockic{margin-left:9px}.t1{margin-left:11px}.t2ic{margin-left:11px}
.se-body{flex:none;height:603px;display:flex;margin-top:3px}
.side{width:26px;flex:none;padding-top:3px;display:flex;flex-direction:column}
.sb{flex:none;width:23px;height:24px;background:#5f87bf;margin-bottom:3px;display:flex;align-items:center;justify-content:center}
.sb.plain{background:none}
.sb svg{margin-left:1px}
.side-sep{flex:none;width:19px;height:1px;background:#888;margin:2px 0 4px 2px}
.side-sep.two{margin:1px 0 4px 2px}
.table{width:324px;flex:none;border:1px solid #333;background:#444;padding:0 0 0 1px}
.thead{display:flex;height:21px;font-size:14.300px;color:#e4e4e4}
.th{border:1px solid #555;display:flex;align-items:center;padding-left:1px;height:21px}
.name{width:258px}
.tri.up{border-top:0;border-bottom:6px solid #eee;margin-right:4px}
.frozen{width:62px;margin-left:1px}
.trow{display:flex;height:22px;align-items:center;margin-top:1px;font-size:14.200px}
.row-eye{width:18px;height:11px;margin-left:17px}
.row-dot{width:14px;height:14px;background:#d4d4d4;border-radius:50%;margin-left:3px}
.row-name{width:200px;height:22px;margin-left:3px;background:#4c4c4c;padding-left:3px;display:flex;align-items:center;border-left:1px solid #383838;color:#e4e4e4}
.row-frozen{width:66px;height:22px;background:#4c4c4c;border-left:1px solid #3c3c3c;display:flex;align-items:center;justify-content:center}
.se-foot{height:32px;display:flex;align-items:center;flex:none}
.local{width:181px;height:27px;margin-left:4px;border:1px solid #5c5c5c;color:#e6e600;padding-left:2px;font-size:14.500px;line-height:20px}
.foot-tri{border-left-width:3px;border-right-width:3px;border-top-width:4px;margin:0 0 0 6px}
.foot-sep{margin-left:6px;height:30px;background:#222}
.stack{margin-left:7px}
.graph-btn{width:30px;height:30px;background:#5f87bf;margin-left:3px;display:flex;align-items:center;justify-content:center}
.foot-sep2{margin-left:3px;height:30px;background:#222}
.more{margin-left:auto;margin-right:8px;color:#50509a;font-size:18px;align-self:flex-start;line-height:14px}

.viewport{position:relative;width:1257px;height:708px;margin-top:7px;flex:none;border:2px solid #7a6a22}
.scene{display:block;width:100%;height:100%}
.vp-label{position:absolute;left:2px;top:6px;color:#d8d8d8;font-size:14px;white-space:nowrap}
.gizmo path{stroke-width:1.200;fill:none}
.g-z,.g-y,.g-x{font:10px "Liberation Sans",sans-serif}
.g-z{fill:#3048d0}.g-y{fill:#2b8e2b}.g-x{fill:#c03030}

.right{margin-left:5px;flex:1;padding-top:10px;display:flex;flex-direction:column}
.right>.dots{margin:0 2px 0 2px}
.cmd-tabs{display:flex;gap:2px;height:33px;margin-top:6px;flex:none}
.ctab{width:38px;height:33px;padding-top:2px;background:#3c3c3c;border-radius:4px 4px 0 0;display:flex;align-items:center;justify-content:center}
.ctab.active{background:#444;border:1px solid #383838;border-bottom:0}
.cmd-panel{height:663px;flex:none;background:#444;border:1px solid #383838;border-radius:0 4px 4px 4px;padding:5px 3px 0 4px;overflow:hidden}
.subtabs{display:flex;height:28px;gap:2px;margin-left:1px;flex:none}
.st{width:26px;height:26px;border-radius:3px;display:flex;align-items:center;justify-content:center}
.st.on{background:#5f87bf}
.dd.prim{width:292px;height:24px;margin-top:6px;color:#c8c8c8;font-size:12.200px;padding-bottom:0}
.rollups-wrap{display:flex;margin-top:7px;height:589px}
.rollups{width:281px;flex:none;display:flex;flex-direction:column;gap:5px;overflow:hidden}
.rollup{flex:none;background:#505050;border:1px solid #3c3c3c;border-radius:3px}
.ro-head{margin:0;height:20px;display:flex;align-items:center;padding-left:5px;font:bold 12.800px "Open Sans",sans-serif;color:#e8e8e8}
.ro-head .s8{margin-left:auto;margin-right:4px}
.tri.ro{border-left-width:4px;border-right-width:4px;border-top-width:6px;border-top-color:#bbb;margin:0 9px 0 0}
.tri.ro.closed{border:solid transparent;border-width:4px 0 4px 6px;border-left-color:#bbb;margin-right:11px;margin-left:1px}
.ro-type{height:254px}
.autogrid{display:flex;align-items:center;margin:10px 0 0 59px;height:17px;color:#d0d0d0;font-size:12.500px}
.chk{width:13px;height:13px;background:#595959;border:1px solid #3e3e3e;margin-right:4px}
.btn-grid{display:grid;grid-template-columns:113px 113px;column-gap:17px;grid-auto-rows:26px;row-gap:6.500px;margin:6px 0 0 18px}
.pbtn{background:#5f5f5f;border:1px solid #454545;border-radius:3px;display:flex;align-items:center;justify-content:center;color:#c6c6c6;font-size:12.500px;padding-top:1px}
.pbtn.dark{background:#3a3a3a;color:#e4e4e4}
.pbtn.blue{background:#5f87bf;border-color:#5f87bf;color:#d8d8d8}
.ro-name{height:79px}
.name-row{display:flex;margin:12px 0 0 14px;gap:6px}
.name-field{width:219px;height:30px;background:#555;border:1px solid #434343}
.swatch{width:27px;height:30px;background:#c42d7e;border:1px solid #333;border-right-color:#555;border-bottom-color:#555}
.ro-method{height:66px}
.radios{display:flex;margin-top:15px;font-size:12.500px;color:#cbcbcb}
.radios label{display:flex;align-items:center}
.radio-a{margin-left:25px;width:132px}
.radio{width:15px;height:15px;border-radius:50%;background:#606060;border:1px solid #484848;margin-right:7px;position:relative}
.radio.on::after{content:"";position:absolute;left:3px;top:3px;width:7px;height:7px;border-radius:50%;background:#e0e0e0}
.ro-key{height:22px}
.ro-params{height:170px}
.param{display:flex;justify-content:flex-end;height:24px;margin-top:8px;margin-right:33px;align-items:flex-start;color:#d6d6d6;font-size:12.500px}
.ro-head+.param{margin-top:15px}
.param>span{margin-right:3px;margin-top:1px}
.param.gap{margin-top:26px}
.spin{width:107px;height:24px;background:#606060;border:1px solid #484848;display:flex;align-items:flex-start;padding:2px 2px 0 6px;color:#bdbdbd;position:relative;font-size:12.500px}
.spin::after{content:"";position:absolute;right:-1px;bottom:-1px;width:15px;height:5px;background:#505050;border-top:1px solid #484848}
.spin-arrows{margin-left:auto;margin-right:0;margin-top:1px;width:7px;height:13px;position:relative;flex:none}
.spin-arrows::before,.spin-arrows::after{content:"";position:absolute;left:0;border-left:3.500px solid transparent;border-right:3.500px solid transparent}
.spin-arrows::before{top:0;border-bottom:5px solid #bbb}
.spin-arrows::after{bottom:0;border-top:5px solid #bbb}
.scrollbar{width:7px;margin-left:5px;height:100%;background:#3a3a3a;border-radius:3px;flex:none}
.scrollbar i{display:block;height:416px;background:#505050;border-radius:3px}

.timeline{height:61px;flex:none;background:#444}
.slider-row{display:flex;height:31px;padding-top:5px;align-items:flex-start}
.tall{height:56px;width:2px;margin-left:3px;background:repeating-linear-gradient(#999 0 1px,transparent 1px 2px)}
.slider-row .tall{margin-right:7px}
.tbtn{height:20px;width:18px;background:#5e5e5e;border-radius:3px;display:flex;align-items:center;justify-content:center;color:#c8c8c8;font-size:13px;margin-right:2px}
.tbtn.mid{width:154px;font-size:13px}
.ruler-row{display:flex;height:30px;margin-left:11px;border-top:1px solid #141414}
.ruler-left{width:62px;flex:none;display:flex;align-items:center;justify-content:center}
.wave{width:20px;height:16px;margin-left:-8px}
.ruler{width:1785px;flex:none;position:relative;background-color:#2a2a2a;background-image:repeating-linear-gradient(90deg,#888 0 1px,transparent 1px 88.6px),repeating-linear-gradient(90deg,#6d6d6d 0 1px,transparent 1px 17.72px);background-size:100% 17px,100% 14px;background-position:7px 0,7px 0;background-repeat:no-repeat}
.thumb{position:absolute;left:2px;top:1px;width:10px;height:28px;background:#7f7a24;border:1px solid #55521a}
.ruler-labels{display:flex;position:absolute;left:-37.300px;top:13px;color:#b9c3cf;font-size:13px}
.ruler-labels span{width:88.600px;text-align:center;flex:none}
.ruler-labels .z{color:#d8d24a}

.status{height:69px;flex:none;display:flex;background:#444;font-size:12.500px;color:#e2e2e2}
.listener{width:121px;margin:7px 0 0 5px;flex:none}
.pink{height:26px;background:#dcc4c4;border:1px solid #8a8a8a;border-width:2px 2px 1px 1px}
.mini-l{height:29px;margin-top:2px;background:#fff;color:#8a8a8a;font:15px/22px "Liberation Mono",monospace;padding-left:3px;overflow:hidden;white-space:nowrap;border:2px solid #ddd;border-top-color:#8a8a8a}
.st-sep{flex:none;width:1px;height:63px;background:#111;margin:4px 0 0 5px}
.prompt{width:678px;flex:none;margin-left:6px;display:flex;flex-direction:column;padding-top:13px;gap:16px}
.prompt span{line-height:16px}
.coords{width:546px;flex:none}
.coord-row{display:flex;align-items:center;height:21px;margin-top:11px}
.ck1{margin-left:12px}.ck2{margin-left:13px}
.ax{display:flex;align-items:center;gap:5px}
.ax.x{margin-left:10px;width:88px}
.coord-row .ax:not(.x){width:87px;margin-left:16px}
.cf{flex:none;width:71px;height:21px;background:#565656;border:1px solid #4a4a4a;color:#8e8e8e;padding-left:3px;overflow:hidden;white-space:nowrap;line-height:19px}
.grid-val{margin-left:17px}
.tag-row{display:flex;align-items:center;margin:8px 0 0 375px;height:25px}
.tag-sep{height:25px}
.tag{width:26px;height:25px;margin-left:1px;background:#5f87bf;border-radius:4px;display:flex;align-items:center;justify-content:center}
.tag-row span{margin-left:6px}
.play{width:158px;flex:none;padding-top:10px;margin-left:-2px;margin-right:2px}
.play-row{display:flex;align-items:center;height:20px}
.p20{width:19px;height:16px;flex:none}
.p-play{width:20px;height:20px;margin:0 6px 0 9px;flex:none}
.play-row .sep{height:20px;margin:0 5px}
.play-row .sep:nth-of-type(n+2){margin:0 7px}
.play-row.two{margin-top:7px}
.frame{width:85px;height:20px;background:#606060;display:flex;align-items:center;padding-left:4px;color:#c8c8c8}
.play-row.two .sep{margin:0 2px}
.play-row.two .p20{margin-right:2px}
.clock{margin-left:4px}
.bigkey{width:53px;height:54px;background:#555;border-radius:4px;flex:none;margin:8px 0 0 0;display:flex;align-items:center;justify-content:center}
.keys{margin:8px 0 0 5px;width:58px;flex:none;display:flex;flex-direction:column;gap:3px}
.kbtn{height:24px;background:#5e5e5e;border-radius:4px;display:flex;align-items:center;justify-content:center;color:#cfcfcf;font-size:13px}
.keyset{margin:8px 0 0 5px;width:143px;flex:none}
.dd.selected{height:22px;width:143px;background:#5f5f5f}
.keyset-row{display:flex;align-items:center;margin-top:6px}
.keyset-row .s22{margin-left:3px}
.filters{width:110px;height:25px;margin-left:6px}
.nav{display:grid;grid-template-columns:repeat(4,20px);column-gap:8.500px;row-gap:9px;margin:10px 0 0 14px;flex:none;align-content:start}
.taskbar{height:3px;flex:none;background:linear-gradient(90deg,#0f1115 690px,#444 690px,#444 740px,#0f1115 740px)}
```
